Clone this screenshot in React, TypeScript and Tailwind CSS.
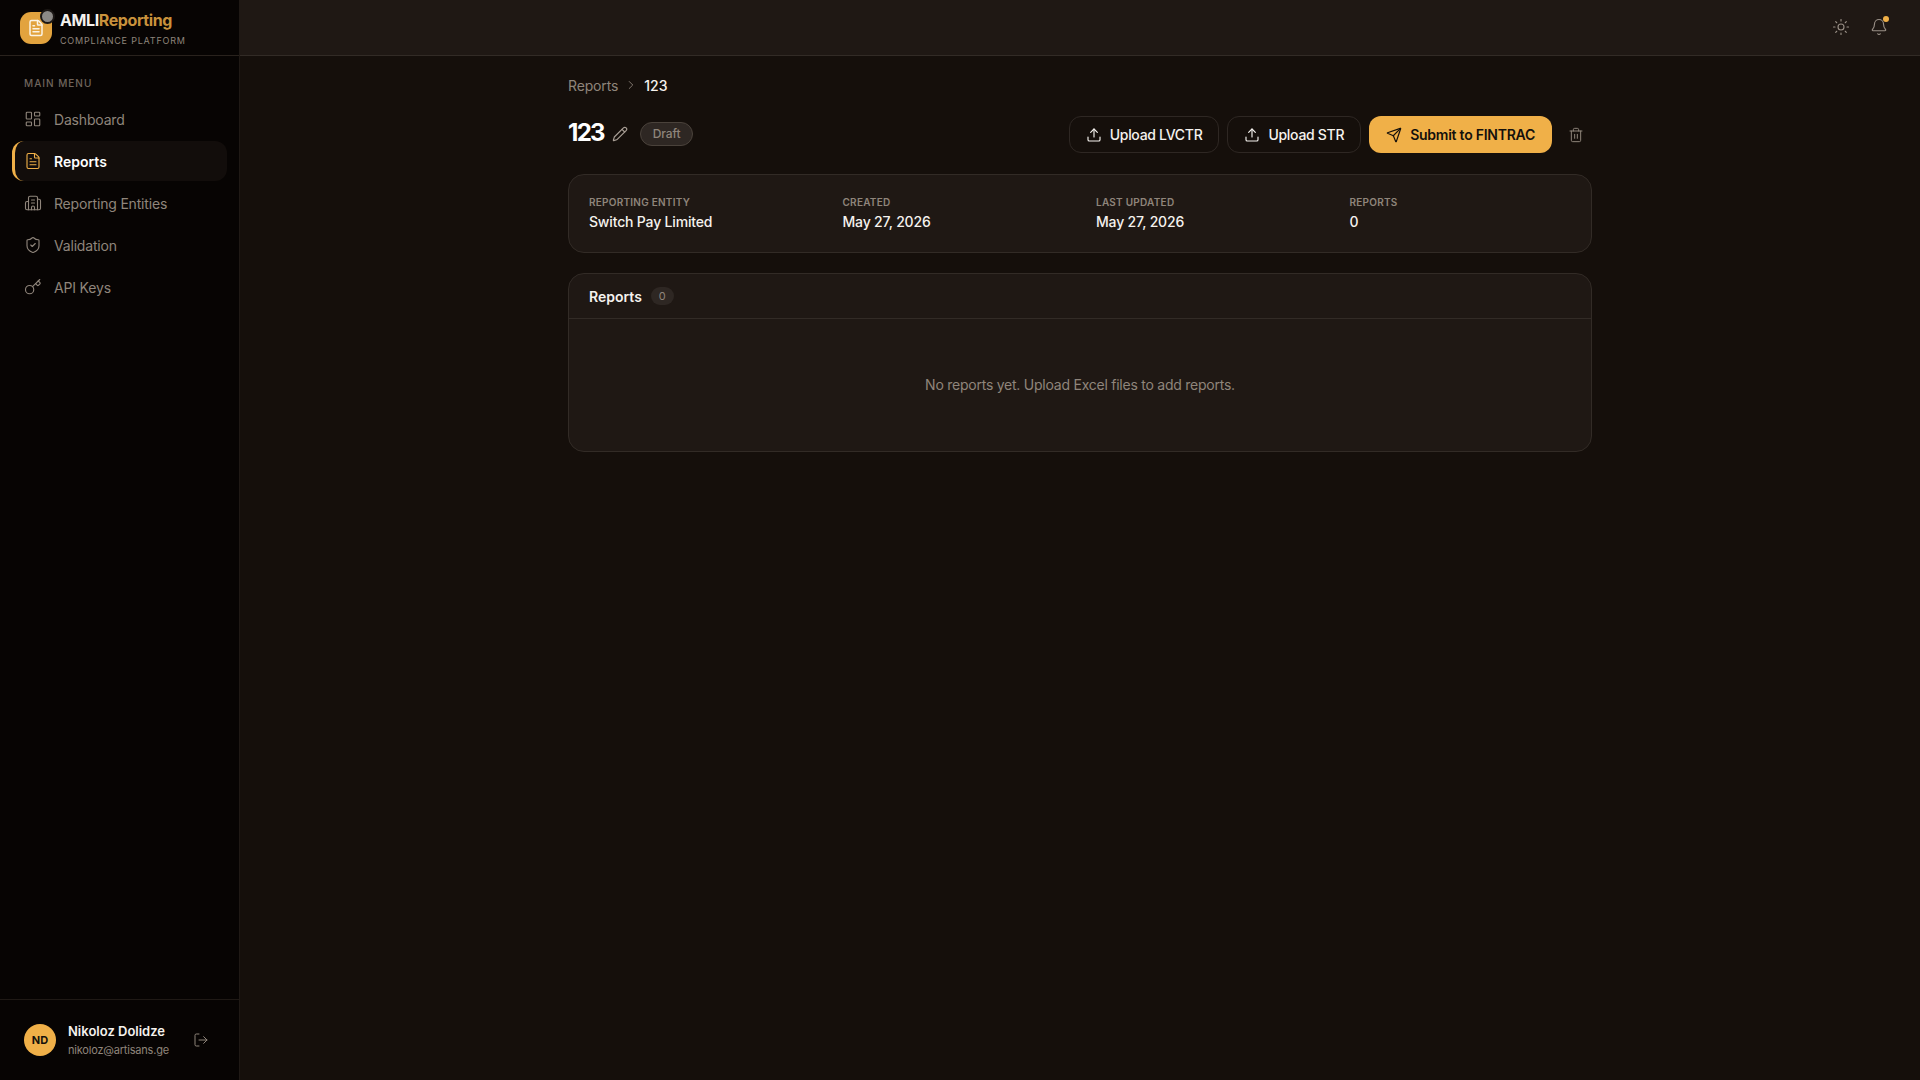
import { LayoutDashboard, FileText, Building2, ShieldCheck, Key, Pencil, Upload, Send, Trash2, Sun, Bell, LogOut, ChevronRight } from "lucide-react";

const nav = [
  { label: "Dashboard", Icon: LayoutDashboard },
  { label: "Reports", Icon: FileText, active: true },
  { label: "Reporting Entities", Icon: Building2 },
  { label: "Validation", Icon: ShieldCheck },
  { label: "API Keys", Icon: Key },
];

const info = [
  ["Reporting Entity", "Switch Pay Limited"],
  ["Created", "May 27, 2026"],
  ["Last Updated", "May 27, 2026"],
  ["Reports", "0"],
];

export default function App() {
  return (
    <div className="flex h-screen w-full overflow-hidden bg-[#150f0b] font-['Inter',sans-serif] text-[#f5f2ee]">
      <aside className="flex w-[240px] shrink-0 flex-col border-r border-[#1f1915] bg-[#070403]">
        <div className="flex h-[56px] shrink-0 items-center gap-2 border-b border-[#29221d] pl-5">
          <div className="relative flex h-8 w-8 items-center justify-center rounded-[11px] bg-[#e2a33e]">
            <FileText size={18} strokeWidth={2} className="text-[#fbf3e4]" />
            <span className="absolute -right-[3px] -top-[3px] h-[15px] w-[15px] rounded-full border-2 border-[#1b1715] bg-[#8b8986]" />
          </div>
          <div className="flex flex-col">
            <div className="text-[16px] font-bold leading-[20px] tracking-[-0.4px]">
              AMLI<span className="text-[#c9923c]">Reporting</span>
            </div>
            <div className="mt-[5px] text-[9px] leading-[11px] tracking-[0.8px] text-[#8f857b]">COMPLIANCE PLATFORM</div>
          </div>
        </div>
        <div className="flex flex-1 flex-col px-3 pt-5">
          <div className="mb-[9px] px-3 text-[10px] font-medium leading-[14px] tracking-[1px] text-[#6f655c]">MAIN MENU</div>
          <nav className="flex flex-col gap-[2px]">
            {nav.map(({ label, Icon, active }) => (
              <div
                key={label}
                className={
                  active
                    ? "flex h-[40px] items-center gap-3 rounded-xl border-l-[3px] border-[#f0b048] bg-[#120d0b] pl-[9px] text-[14px] font-semibold text-white"
                    : "flex h-[40px] items-center gap-3 rounded-xl pl-3 text-[14px] tracking-[-0.18px] text-[#8f857b]"
                }
              >
                <Icon size={18} strokeWidth={1.5} className={active ? "text-[#f0b048]" : "text-[#8f857b]"} />
                {label}
              </div>
            ))}
          </nav>
        </div>
        <div className="flex h-[81px] shrink-0 items-center border-t border-[#1f1915] px-6">
          <div className="flex h-8 w-8 items-center justify-center rounded-full bg-[#f0b048] text-[11px] font-bold text-[#14100c]">ND</div>
          <div className="ml-3 flex flex-1 flex-col">
            <div className="text-[13px] font-semibold leading-[18px] text-[#f5f2ee]">Nikoloz Dolidze</div>
            <div className="mt-[2px] text-[11px] leading-[16px] tracking-[-0.2px] text-[#8f857b]">nikoloz@artisans.ge</div>
          </div>
          <LogOut size={16} strokeWidth={1.5} className="mr-[6px] text-[#8f857b]" />
        </div>
      </aside>
      <div className="flex min-w-0 flex-1 flex-col">
        <header className="flex h-[56px] shrink-0 items-center justify-end gap-[20px] border-b border-[#322b26] bg-[#1f1814] pb-[2px] pr-[32px]">
          <Sun size={18} strokeWidth={1.5} className="text-[#9a9087]" />
          <div className="relative">
            <Bell size={18} strokeWidth={1.5} className="text-[#9a9087]" />
            <span className="absolute -right-[1px] -top-[2px] h-[6px] w-[6px] rounded-full bg-[#f0b048]" />
          </div>
        </header>
        <main className="flex-1 overflow-hidden">
          <div className="mx-auto w-full max-w-[1024px] pt-[19px]">
            <div className="flex h-5 items-center gap-[6px] text-[14px] tracking-[-0.15px] text-[#8f857b]">
              <span>Reports</span>
              <ChevronRight size={14} strokeWidth={1.5} />
              <span className="font-medium tracking-[0px] text-[#f5f2ee]">123</span>
            </div>
            <div className="mt-[20px] flex h-[38px] items-center">
              <h1 className="pb-[2px] text-[24px] font-bold leading-[32px] tracking-[-1.7px] text-white">123</h1>
              <Pencil size={16} strokeWidth={1.75} className="ml-[8px] text-[#a89e95]" />
              <span className="ml-[12px] mb-[1px] flex h-[24px] items-center rounded-full border border-[#4a423b] bg-[#2e2723] px-[12px] text-[12px] font-medium tracking-[-0.15px] text-[#8f857b]">Draft</span>
              <div className="ml-auto mt-[1px] flex items-center gap-2">
                <button className="flex h-[37px] items-center gap-2 rounded-xl border border-[#2e2723] px-4 text-[14px] font-medium tracking-[-0.3px] text-[#f5f2ee]">
                  <Upload size={16} strokeWidth={1.75} />Upload LVCTR
                </button>
                <button className="flex h-[37px] items-center gap-2 rounded-xl border border-[#2e2723] px-4 text-[14px] font-medium tracking-[-0.3px] text-[#f5f2ee]">
                  <Upload size={16} strokeWidth={1.75} />Upload STR
                </button>
                <button className="flex h-[37px] items-center gap-2 rounded-xl bg-[#f0b048] px-[17px] text-[14px] font-semibold tracking-[-0.25px] text-[#14100c]">
                  <Send size={16} strokeWidth={1.75} />Submit to FINTRAC
                </button>
                <button className="flex h-[37px] w-[32px] items-center justify-center text-[#8f857b]">
                  <Trash2 size={16} strokeWidth={1.5} />
                </button>
              </div>
            </div>
            <div className="mt-[21px] grid grid-cols-4 gap-8 rounded-2xl border border-[#322b26] bg-[#1f1814] px-5 py-5">
              {info.map(([k, v]) => (
                <div key={k}>
                  <div className="text-[10px] font-semibold uppercase leading-[14px] tracking-[0.25px] text-[#8f857b]">{k}</div>
                  <div className="mt-[3px] text-[14px] font-medium leading-[20px] tracking-[-0.17px] text-[#f5f2ee]">{v}</div>
                </div>
              ))}
            </div>
            <div className="mt-[20px] overflow-hidden rounded-2xl border border-[#322b26] bg-[#1f1814]">
              <div className="flex h-[45px] items-center gap-[9px] border-b border-[#322b26] px-5">
                <span className="text-[14px] font-semibold text-[#f5f2ee]">Reports</span>
                <span className="flex h-[18px] w-[23px] items-center justify-center rounded-full bg-[#2e2723] text-[11px] text-[#8f857b]">0</span>
              </div>
              <div className="py-14 text-center text-[14px] leading-5 tracking-[-0.24px] text-[#8f857b]">No reports yet. Upload Excel files to add reports.</div>
            </div>
          </div>
        </main>
      </div>
    </div>
  );
}
